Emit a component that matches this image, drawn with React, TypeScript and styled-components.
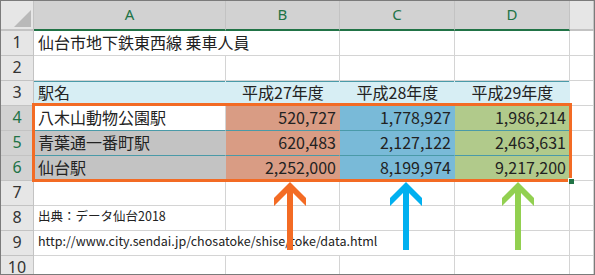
import styled, { createGlobalStyle, css } from "styled-components";

const GlobalStyle = createGlobalStyle`
  body {
    margin: 0;
    background: #ffffff;
    font-family: "Noto Sans CJK JP", "Noto Sans", sans-serif;
  }
`;

const ORANGE = "#f36b24";
const TEAL = "#4a9aa8";
const GRID = "#d4d4d4";
const HEAD_LINE = "#c3c3c3";
const EXCEL_GREEN = "#217346";

const tracks = css`
  display: grid;
  grid-template-columns: 33px 192px 114px 115px 115px 1fr;
  grid-template-rows: 30px repeat(10, 25px);
`;

type CellData = {
  text?: string;
  bg?: string;
  align?: "left" | "center" | "right";
  span?: number;
  bottom?: string;
  right?: string;
  top?: boolean;
  small?: boolean;
};

const CYAN = "#d7eef4";
const SALMON = "#d99c84";
const BLUE = "#79bad8";
const LEAF = "#b1ca8b";
const GRAY = "#c3c3c3";

const blank = (n: number): CellData[] => Array.from({ length: n }, () => ({}));

const rows: CellData[][] = [
  [{ text: "仙台市地下鉄東西線 乗車人員", span: 2 }, ...blank(3)],
  blank(5),
  [
    { text: "駅名", bg: CYAN, top: true },
    { text: "平成27年度", bg: CYAN, top: true, align: "center" },
    { text: "平成28年度", bg: CYAN, top: true, align: "center" },
    { text: "平成29年度", bg: CYAN, top: true, align: "center" },
    {},
  ],
  [
    { text: "八木山動物公園駅", bottom: TEAL, right: GRID },
    { text: "520,727", bg: SALMON, align: "right", bottom: TEAL },
    { text: "1,778,927", bg: BLUE, align: "right", bottom: TEAL },
    { text: "1,986,214", bg: LEAF, align: "right", bottom: TEAL },
    {},
  ],
  [
    { text: "青葉通一番町駅", bg: GRAY, bottom: TEAL },
    { text: "620,483", bg: SALMON, align: "right", bottom: TEAL },
    { text: "2,127,122", bg: BLUE, align: "right", bottom: TEAL },
    { text: "2,463,631", bg: LEAF, align: "right", bottom: TEAL },
    {},
  ],
  [
    { text: "仙台駅", bg: GRAY },
    { text: "2,252,000", bg: SALMON, align: "right" },
    { text: "8,199,974", bg: BLUE, align: "right" },
    { text: "9,217,200", bg: LEAF, align: "right" },
    {},
  ],
  blank(5),
  [{ text: "出典：データ仙台2018", small: true }, ...blank(4)],
  [
    { text: "http://www.city.sendai.jp/chosatoke/shise/toke/data.html", small: true, span: 3 },
    ...blank(2),
  ],
  blank(5),
];

const activeRows = [4, 5, 6];

const App = () => {
  return (
    <>
      <GlobalStyle />
      <Frame>
        <Sheet>
          <Corner />
          {["A", "B", "C", "D"].map((l) => (
            <ColHead key={l} $active>
              {l}
            </ColHead>
          ))}
          <ColHead />
          {rows.map((cells, i) => (
            <Row key={i} n={i + 1} cells={cells} />
          ))}
        </Sheet>
        <Layer>
          <Selection>
            <Handle />
          </Selection>
          <ArrowSlot $col={3} $shift={47}>
            <Arrow color={ORANGE} />
          </ArrowSlot>
          <ArrowSlot $col={4} $shift={49}>
            <Arrow color="#00b0f0" />
          </ArrowSlot>
          <ArrowSlot $col={5} $shift={46}>
            <Arrow color="#92d050" />
          </ArrowSlot>
        </Layer>
      </Frame>
    </>
  );
};

const Row = ({ n, cells }: { n: number; cells: CellData[] }) => {
  const active = activeRows.includes(n);
  return (
    <>
      <RowHead $active={active}>{n}</RowHead>
      {cells.map((c, j) => (
        <Cell
          key={j}
          $bg={c.bg}
          $align={c.align}
          $span={c.span}
          $bottom={c.bottom}
          $right={c.right}
          $top={c.top}
          $small={c.small}
        >
          {c.text}
        </Cell>
      ))}
    </>
  );
};

const Arrow = ({ color }: { color: string }) => (
  <svg width="34" height="70" viewBox="0 0 34 70">
    <polygon
      points="17,1 33,17 33,25 20,12 20,69 14,69 14,12 1,25 1,17"
      fill={color}
    />
  </svg>
);

const Frame = styled.div`
  position: relative;
  width: 595px;
  height: 275px;
  box-sizing: border-box;
  border: 1px solid #7b7b7b;
  overflow: hidden;
  background: #ffffff;
`;

const Sheet = styled.div`
  ${tracks};
`;

const Corner = styled.div`
  position: relative;
  background: #e6e6e6;
  border-right: 1px solid ${HEAD_LINE};
  border-bottom: 2px solid ${HEAD_LINE};

  &::after {
    content: "";
    position: absolute;
    right: 2px;
    bottom: 2px;
    width: 17px;
    height: 17px;
    background: #b9b9b9;
    clip-path: polygon(100% 0, 100% 100%, 0 100%);
  }
`;

const ColHead = styled.div<{ $active?: boolean }>`
  display: flex;
  align-items: center;
  justify-content: center;
  background: ${(p) => (p.$active ? "#d2d2d2" : "#e6e6e6")};
  border-right: 1px solid ${HEAD_LINE};
  border-bottom: 2px solid ${(p) => (p.$active ? EXCEL_GREEN : HEAD_LINE)};
  color: ${EXCEL_GREEN};
  font-family: "Noto Sans", sans-serif;
  font-size: 15px;
  padding-bottom: 2px;
`;

const RowHead = styled.div<{ $active?: boolean }>`
  display: flex;
  align-items: center;
  justify-content: center;
  padding-bottom: 2px;
  background: ${(p) => (p.$active ? "#d2d2d2" : "#e6e6e6")};
  border-right: 1px solid ${HEAD_LINE};
  border-bottom: 1px solid ${HEAD_LINE};
  color: ${(p) => (p.$active ? EXCEL_GREEN : "#333333")};
  font-family: "Noto Sans", sans-serif;
  font-size: 16px;
`;

const Cell = styled.div<{
  $bg?: string;
  $align?: "left" | "center" | "right";
  $span?: number;
  $bottom?: string;
  $right?: string;
  $top?: boolean;
  $small?: boolean;
}>`
  display: flex;
  align-items: center;
  justify-content: ${(p) =>
    p.$align === "right" ? "flex-end" : p.$align === "center" ? "center" : "flex-start"};
  grid-column: span ${(p) => p.$span ?? 1};
  min-width: 0;
  padding: 0 3px 3px 4px;
  white-space: nowrap;
  background: ${(p) => p.$bg ?? "#ffffff"};
  border-right: 1px solid ${(p) => p.$right ?? (p.$bg ? "transparent" : GRID)};
  border-bottom: 1px solid ${(p) => p.$bottom ?? (p.$bg ? "transparent" : GRID)};
  box-shadow: ${(p) => (p.$top ? `inset 0 1px 0 ${TEAL}` : "none")};
  color: #222222;
  font-size: ${(p) => (p.$small ? "12.5px" : "16px")};
  line-height: 1;
`;

const Layer = styled.div`
  ${tracks};
  position: absolute;
  inset: 0;
  pointer-events: none;
`;

const Selection = styled.div`
  position: relative;
  grid-column: 2 / 6;
  grid-row: 5 / 8;
  margin: -3px -2px -1px -2px;
  border: 3px solid ${ORANGE};
`;

const Handle = styled.div`
  position: absolute;
  right: -5px;
  bottom: -5px;
  width: 5px;
  height: 5px;
  background: ${EXCEL_GREEN};
  border-left: 1px solid #ffffff;
  border-top: 1px solid #ffffff;
`;

const ArrowSlot = styled.div<{ $col: number; $shift: number }>`
  grid-column: ${(p) => p.$col};
  grid-row: 8 / 11;
  justify-self: start;
  align-self: start;
  margin-left: ${(p) => p.$shift}px;
  line-height: 0;
`;

export default App;
